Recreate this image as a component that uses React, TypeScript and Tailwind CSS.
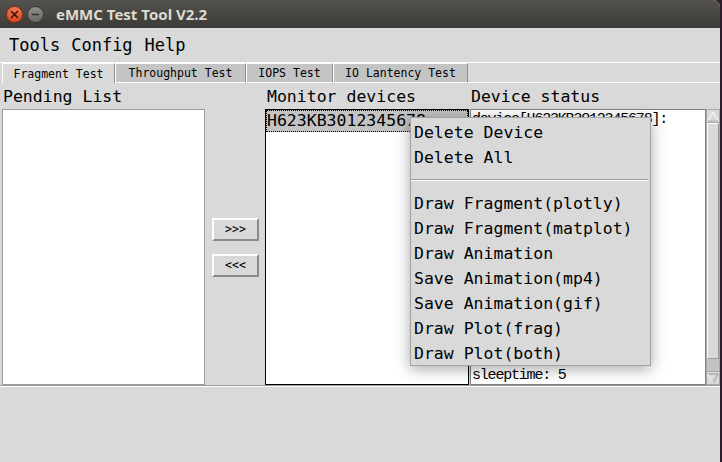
import React from "react";

const mono = "font-['DejaVu_Sans_Mono',monospace]";

function Tab({ label, selected, w }: { label: string; selected?: boolean; w: string }) {
  return (
    <div
      className={`${w} h-[20px] flex items-center justify-center border-t border-l border-t-white border-l-white border-r border-r-[#8f8f8f] ${
        selected ? "bg-[#d9d9d9]" : "bg-[#c4c4c4] border-b border-b-white"
      } text-[11.5px] text-black ${mono}`}
    >
      <span className="relative top-[1px]">{label}</span>
    </div>
  );
}

function TkButton({ label }: { label: string }) {
  return (
    <div
      className={`w-[47px] h-[23px] flex items-center justify-center bg-[#d9d9d9] border-t-2 border-l-2 border-t-white border-l-white border-b-2 border-r-2 border-b-[#8a8a8a] border-r-[#8a8a8a] text-[11.5px] text-black ${mono}`}
    >
      {label}
    </div>
  );
}

const menuItems1 = ["Delete Device", "Delete All"];
const menuItems2 = [
  "Draw Fragment(plotly)",
  "Draw Fragment(matplot)",
  "Draw Animation",
  "Save Animation(mp4)",
  "Save Animation(gif)",
  "Draw Plot(frag)",
  "Draw Plot(both)",
];

const statusLines = [
  "device[H623KB3012345678]:",
  "", "", "", "", "", "", "", "", "", "", "", "", "", "", "",
  "sleeptime: 5",
];

export default function App() {
  return (
    <div className="w-[722px] h-[462px] bg-[#2c1b2a] flex overflow-hidden">
      <div className="w-[720px] h-[462px] flex flex-col bg-[#d9d9d9] relative rounded-tr-[7px] overflow-hidden">
        {/* Title bar */}
        <div className="h-[28px] flex items-center bg-gradient-to-b from-[#53524e] to-[#3c3b37] shrink-0">
          <div className="ml-[6px] w-[17px] h-[17px] rounded-full bg-gradient-to-b from-[#f27a53] to-[#d9461f] border border-[#8c2d13] flex items-center justify-center">
            <svg width="9" height="9" viewBox="0 0 9 9">
              <path d="M1.5 1.5 L7.5 7.5 M7.5 1.5 L1.5 7.5" stroke="#3a1608" strokeWidth="1.6" strokeLinecap="round" />
            </svg>
          </div>
          <div className="ml-[4px] w-[17px] h-[17px] rounded-full bg-gradient-to-b from-[#8e8d88] to-[#6a6965] border border-[#3a3936] flex items-center justify-center">
            <svg width="9" height="9" viewBox="0 0 9 9">
              <path d="M1.5 4.5 L7.5 4.5" stroke="#2f2e2b" strokeWidth="1.6" strokeLinecap="round" />
            </svg>
          </div>
          <div className="ml-[12px] text-[15px] font-bold text-[#dfdbd2] font-['Noto_Sans',sans-serif] leading-none">
            eMMC Test Tool V2.2
          </div>
        </div>

        {/* Menu bar */}
        <div className={`h-[35px] flex items-center shrink-0 text-[17px] text-black ${mono} border-b border-b-white`}>
          <span className="ml-[9px] relative top-[1px]">Tools</span>
          <span className="ml-[11px] relative top-[1px]">Config</span>
          <span className="ml-[12px] relative top-[1px]">Help</span>
        </div>

        {/* Tabs */}
        <div className="h-[20px] flex pl-[2px] shrink-0">
          <Tab label="Fragment Test" selected w="w-[113px]" />
          <Tab label="Throughput Test" w="w-[131px]" />
          <Tab label="IOPS Test" w="w-[87px]" />
          <Tab label="IO Lantency Test" w="w-[135px]" />
          <div className="flex-1 border-b border-b-white" />
        </div>

        {/* Content */}
        <div className="flex h-[303px] shrink-0 border-b border-b-[#9a9a9a]">
          {/* Pending */}
          <div className="ml-[2px] w-[203px] flex flex-col">
            <div className={`h-[26px] flex items-center pl-[1px] text-[16.5px] text-black ${mono}`}>
              <span className="relative top-[1px]">Pending List</span>
            </div>
            <div className="h-[276px] bg-white border border-[#9c9c9c]" />
          </div>
          {/* Buttons */}
          <div className="w-[60px] flex flex-col items-start pl-[7px] pt-[135px] gap-[13px]">
            <TkButton label=">>>" />
            <TkButton label="<<<" />
          </div>
          {/* Monitor */}
          <div className="w-[204px] flex flex-col">
            <div className={`h-[26px] flex items-center pl-[2px] text-[16.5px] text-black ${mono}`}>
              <span className="relative top-[1px]">Monitor devices</span>
            </div>
            <div className="h-[276px] bg-white border border-black">
              <div className={`h-[22px] bg-[#c3c3c3] border border-dotted border-black flex items-center pl-0 text-[16.5px] text-black ${mono} leading-none`}>
                H623KB3012345678
              </div>
            </div>
          </div>
          {/* Status */}
          <div className="ml-[1px] flex-1 flex flex-col">
            <div className={`h-[26px] flex items-center pl-[1px] text-[16.5px] text-black ${mono}`}>
              <span className="relative top-[1px]">Device status</span>
            </div>
            <div className="h-[276px] flex">
              <div className="flex-1 bg-white border border-[#808080] overflow-hidden pl-[1px] pt-[2px]">
                {statusLines.map((l, i) => (
                  <div
                    key={i}
                    className="h-[16px] leading-[16px] whitespace-pre text-[15px] tracking-[-1.2px] text-black font-['Liberation_Mono',monospace]"
                  >
                    {l}
                  </div>
                ))}
              </div>
              {/* Scrollbar */}
              <div className="w-[14px] bg-[#c3c3c3] border border-[#a8a8a8] flex flex-col">
                <div className="h-[13px] flex items-center justify-center bg-[#d9d9d9] border-b border-[#a8a8a8]">
                  <svg width="12" height="11" viewBox="0 0 12 11">
                    <path d="M6 1 L11 10 L1 10 Z" fill="#d9d9d9" stroke="#ffffff" strokeWidth="1" />
                    <path d="M11 10 L1 10" stroke="#9a9a9a" strokeWidth="1" />
                  </svg>
                </div>
                <div className="h-[236px] bg-[#d9d9d9] border-t border-l border-t-white border-l-white border-b border-r border-b-[#9a9a9a] border-r-[#9a9a9a]" />
                <div className="flex-1" />
                <div className="h-[13px] flex items-center justify-center bg-[#d9d9d9] border-t border-[#a8a8a8]">
                  <svg width="12" height="11" viewBox="0 0 12 11">
                    <path d="M1 1 L11 1 L6 10 Z" fill="#d9d9d9" stroke="#9a9a9a" strokeWidth="1" />
                    <path d="M1 1 L6 10" stroke="#ffffff" strokeWidth="1" />
                  </svg>
                </div>
              </div>
            </div>
          </div>
        </div>
        <div className="flex-1 border-t border-t-white" />

        {/* Popup menu */}
        <div
          className={`absolute left-[410px] top-[117px] w-[241px] bg-[#d9d9d9] border border-[#a3a3a3] pt-[1px] shadow-[0_3px_14px_rgba(0,0,0,0.35)] text-[16.5px] text-black ${mono}`}
        >
          {menuItems1.map((m) => (
            <div key={m} className="h-[25px] flex items-center pl-[3px]">
              <span className="relative top-[2px]">{m}</span>
            </div>
          ))}
          <div className="h-[21px] flex items-center pr-[2px]">
            <div className="w-full h-[2px] border-t border-t-[#a0a0a0] border-b border-b-white" />
          </div>
          {menuItems2.map((m) => (
            <div key={m} className="h-[25px] flex items-center pl-[3px]">
              <span className="relative top-[2px]">{m}</span>
            </div>
          ))}
        </div>
      </div>
      <div className="w-[2px] bg-[#2c1b2a]" />
    </div>
  );
}
